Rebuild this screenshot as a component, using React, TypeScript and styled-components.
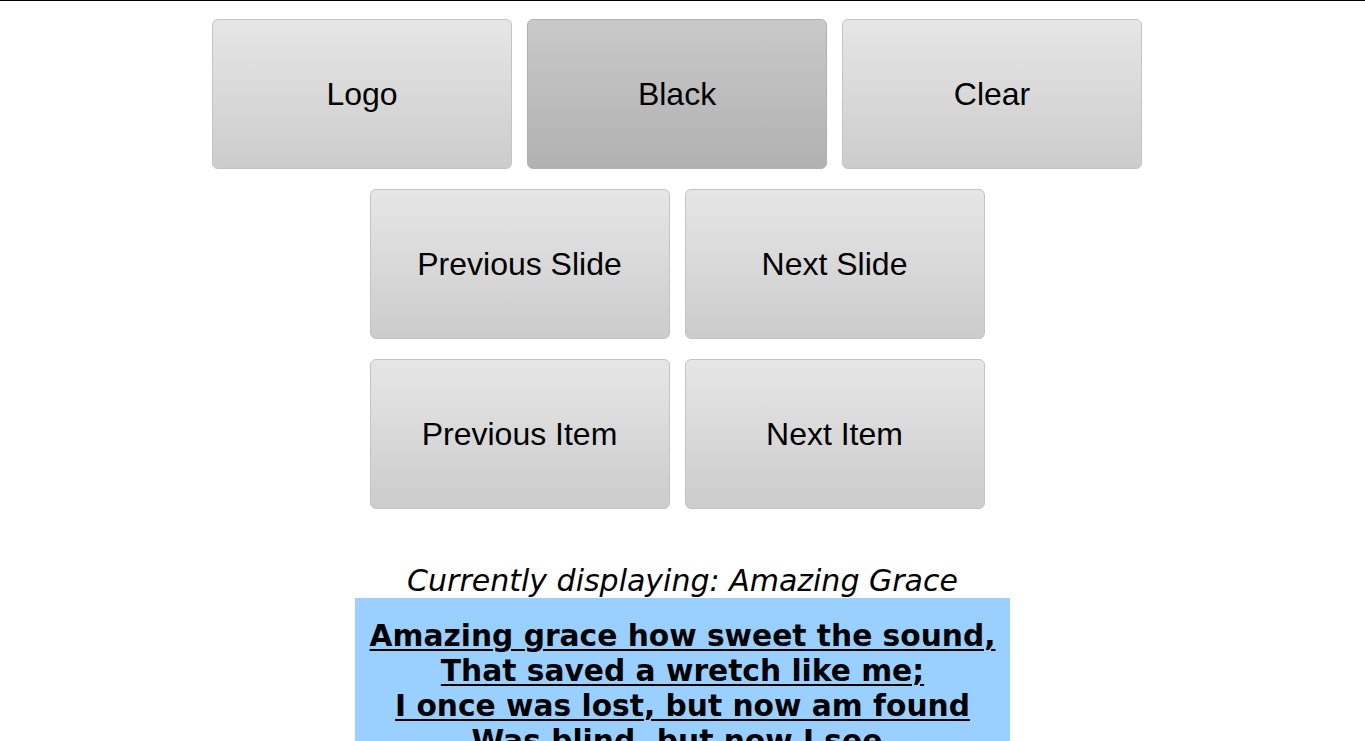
import React from "react";
import styled, { createGlobalStyle, css } from "styled-components";

const GlobalStyle = createGlobalStyle`
  html, body {
    margin: 0;
    padding: 0;
    background: #ffffff;
  }
  body {
    font-family: "Liberation Sans", Arial, sans-serif;
  }
`;

const Page = styled.div`
  min-height: 1480px;
  border-top: 1px solid #000000;
  box-sizing: border-box;
  padding-top: 18px;
  display: flex;
  flex-direction: column;
  align-items: center;
`;

const Controls = styled.div`
  display: flex;
  flex-direction: column;
  align-items: center;
  gap: 20px;
  padding-right: 11px;
`;

const ButtonRow = styled.div`
  display: flex;
  justify-content: center;
  gap: 15px;
`;

const ControlButton = styled.button<{ $active?: boolean }>`
  width: 300px;
  height: 150px;
  box-sizing: border-box;
  border: 1px solid #c4c4c4;
  border-radius: 6px;
  background: linear-gradient(to bottom, #e6e6e6 0%, #cccccc 100%);
  font-family: "Liberation Sans", Arial, sans-serif;
  font-size: 32px;
  color: #000000;
  padding: 0;
  cursor: pointer;
  display: flex;
  align-items: center;
  justify-content: center;
  ${(p) =>
    p.$active &&
    css`
      border-color: #b0b0b0;
      background: linear-gradient(to bottom, #c9c9c9 0%, #b1b1b1 100%);
    `}
`;

const Display = styled.section`
  margin-top: 54px;
  display: flex;
  flex-direction: column;
  align-items: center;
`;

const Caption = styled.div`
  font-family: "DejaVu Sans", Verdana, sans-serif;
  font-style: italic;
  font-size: 30px;
  line-height: 35px;
  color: #000000;
`;

const SlideBox = styled.div`
  background: #99d0ff;
  padding: 20px 15px 20px;
  text-align: center;
`;

const Lyric = styled.div`
  font-family: "DejaVu Sans", Verdana, sans-serif;
  font-weight: bold;
  font-size: 29.7px;
  line-height: 35px;
  color: #000000;
  text-decoration: underline;
  text-decoration-thickness: 2px;
  text-underline-offset: 3px;
  white-space: nowrap;
`;

const lyrics = [
  "Amazing grace how sweet the sound,",
  "That saved a wretch like me;",
  "I once was lost, but now am found",
  "Was blind, but now I see.",
];

export default function App() {
  return (
    <>
      <GlobalStyle />
      <Page>
        <Controls>
          <ButtonRow>
            <ControlButton>Logo</ControlButton>
            <ControlButton $active>Black</ControlButton>
            <ControlButton>Clear</ControlButton>
          </ButtonRow>
          <ButtonRow>
            <ControlButton>Previous Slide</ControlButton>
            <ControlButton>Next Slide</ControlButton>
          </ButtonRow>
          <ButtonRow>
            <ControlButton>Previous Item</ControlButton>
            <ControlButton>Next Item</ControlButton>
          </ButtonRow>
        </Controls>
        <Display>
          <Caption>Currently displaying: Amazing Grace</Caption>
          <SlideBox>
            {lyrics.map((line) => (
              <Lyric key={line}>{line}</Lyric>
            ))}
          </SlideBox>
        </Display>
      </Page>
    </>
  );
}
